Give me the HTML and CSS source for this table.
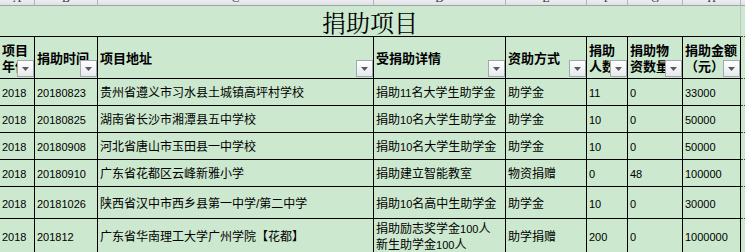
FILE: index.html
```html
<!DOCTYPE html>
<html lang="zh-CN">
<head>
<meta charset="utf-8">
<title>捐助项目</title>
<link rel="stylesheet" href="styles.css">
</head>
<body>
<div class="sheet">
  <div class="ch"><span>A</span></div>
  <div class="ch"><span>B</span></div>
  <div class="ch"><span>C</span></div>
  <div class="ch"><span>D</span></div>
  <div class="ch"><span>E</span></div>
  <div class="ch"><span>F</span></div>
  <div class="ch"><span>G</span></div>
  <div class="ch"><span>H</span></div>
  <div class="ch ch-rest"></div>

  <div class="title">捐助项目</div>
  <div class="edge"></div>

  <div class="hd"><span>项目年份</span><b class="f"></b></div>
  <div class="hd"><span>捐助时间</span><b class="f"></b></div>
  <div class="hd"><span>项目地址</span><b class="f"></b></div>
  <div class="hd"><span>受捐助详情</span><b class="f"></b></div>
  <div class="hd"><span>资助方式</span><b class="f"></b></div>
  <div class="hd"><span>捐助人数</span><b class="f"></b></div>
  <div class="hd"><span>捐助物资数量</span><b class="f"></b></div>
  <div class="hd"><span>捐助金额（元）</span><b class="f"></b></div>
  <div class="edge"></div>

  <div class="c num">2018</div>
  <div class="c num">20180823</div>
  <div class="c">贵州省遵义市习水县土城镇高坪村学校</div>
  <div class="c">捐助<span class="n">11</span>名大学生助学金</div>
  <div class="c">助学金</div>
  <div class="c num">11</div>
  <div class="c num">0</div>
  <div class="c num">33000</div>
  <div class="edge"></div>

  <div class="c num">2018</div>
  <div class="c num">20180825</div>
  <div class="c">湖南省长沙市湘潭县五中学校</div>
  <div class="c">捐助<span class="n">10</span>名大学生助学金</div>
  <div class="c">助学金</div>
  <div class="c num">10</div>
  <div class="c num">0</div>
  <div class="c num">50000</div>
  <div class="edge"></div>

  <div class="c num">2018</div>
  <div class="c num">20180908</div>
  <div class="c">河北省唐山市玉田县一中学校</div>
  <div class="c">捐助<span class="n">10</span>名大学生助学金</div>
  <div class="c">助学金</div>
  <div class="c num">10</div>
  <div class="c num">0</div>
  <div class="c num">50000</div>
  <div class="edge"></div>

  <div class="c num">2018</div>
  <div class="c num">20180910</div>
  <div class="c">广东省花都区云峰新雅小学</div>
  <div class="c">捐助建立智能教室</div>
  <div class="c">物资捐赠</div>
  <div class="c num">0</div>
  <div class="c num">48</div>
  <div class="c num">100000</div>
  <div class="edge"></div>

  <div class="c num">2018</div>
  <div class="c num">20181026</div>
  <div class="c">陕西省汉中市西乡县第一中学/第二中学</div>
  <div class="c">捐助<span class="n">10</span>名高中生助学金</div>
  <div class="c">助学金</div>
  <div class="c num">10</div>
  <div class="c num">0</div>
  <div class="c num">30000</div>
  <div class="edge"></div>

  <div class="c num">2018</div>
  <div class="c num">201812</div>
  <div class="c">广东省华南理工大学广州学院【花都】</div>
  <div class="c c-two"><span>捐助励志奖学金<span class="n">100</span>人<br>新生助学金<span class="n">100</span>人</span></div>
  <div class="c">助学捐赠</div>
  <div class="c num">200</div>
  <div class="c num">0</div>
  <div class="c num">1000000</div>
  <div class="edge"></div>
</div>
</body>
</html>
```

FILE: styles.css
```css
* {
  box-sizing: border-box;
  margin: 0;
  padding: 0;
}

body {
  margin: 0;
  background: #cce8cf;
  color: #000;
  font-family: "Liberation Sans", "Noto Sans CJK SC", sans-serif;
  overflow: hidden;
}

.sheet {
  display: grid;
  grid-template-columns: 35px 63px 276px 132px 81px 41px 55px 58px 1fr;
  grid-template-rows: 6px 31px 42px 27px 27px 27px 27px 32px 34px;
  width: 745px;
  height: 252px;
  overflow: hidden;
}

/* column letter strip */
.ch {
  background: linear-gradient(#eceef1, #dfe2e6);
  border-right: 1px solid #b1b5ba;
  border-bottom: 1px solid #9fa3a8;
  overflow: hidden;
  text-align: center;
  color: #3a3a3a;
  font: 12px/12px "Liberation Serif", serif;
}

.ch span {
  display: block;
  margin-top: -8px;
}

.ch-rest {
  border-right: none;
}

/* title */
.title {
  grid-column: 1 / 9;
  display: flex;
  align-items: center;
  justify-content: center;
  padding-top: 2px;
  border-right: 1px solid #b9c9bb;
  border-bottom: 1px solid #000;
  font: 24px/30px "Noto Serif CJK SC", "Noto Sans CJK SC", serif;
}

.edge {
  border-bottom: 1px dotted #444;
}

/* header cells */
.hd {
  position: relative;
  display: flex;
  align-items: center;
  padding: 0 2px 0 2px;
  border-right: 1px solid #000;
  border-bottom: 1px solid #000;
  font: 700 13px/16px "Noto Sans CJK SC", sans-serif;
  overflow: hidden;
}

.f {
  position: absolute;
  right: 0;
  bottom: 1px;
  width: 17px;
  height: 17px;
  border: 1px solid #a3a8b0;
  background: linear-gradient(#ffffff, #e6e9ed);
}

.f::after {
  content: "";
  position: absolute;
  left: 4px;
  top: 6px;
  width: 7px;
  height: 4px;
  background: #5a5a5a;
  clip-path: polygon(0 0, 100% 0, 50% 100%);
}

/* data cells */
.c {
  display: flex;
  align-items: center;
  padding: 2px 0 0 2px;
  border-right: 1px solid #000;
  border-bottom: 1px solid #000;
  font-size: 12px;
  line-height: 14px;
  white-space: nowrap;
  overflow: hidden;
}

.c-two {
  line-height: 16px;
}

.num,
.n {
  font-size: 11px;
}
```
